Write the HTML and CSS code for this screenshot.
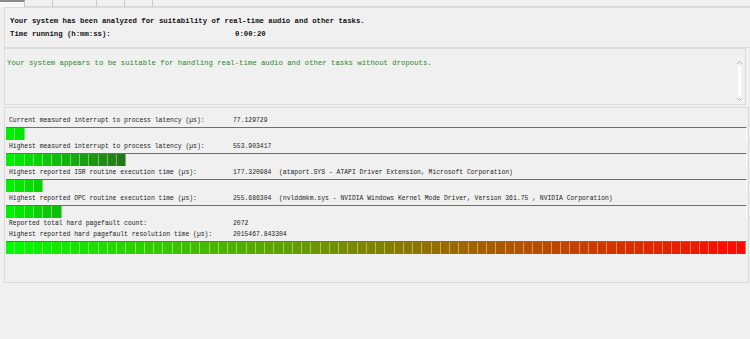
FILE: index.html
```html
<!DOCTYPE html>
<html lang="en">
<head>
<meta charset="UTF-8">
<title>Latency check</title>
<link rel="stylesheet" href="styles.css">
</head>
<body>
<div class="tabs">
  <div class="tab active"></div>
  <div class="tab w28"></div>
  <div class="tab w44"></div>
  <div class="tab w28"></div>
  <div class="tab w28"></div>
  <div class="tab rest"></div>
</div>
<div class="page">
  <div class="summary">
    <div class="pair strong"><span>Your system has been analyzed for suitability of real-time audio and other tasks.</span></div>
    <div class="pair strong"><span>Time running (h:mm:ss):</span><span>0:00:20</span></div>
  </div>

  <div class="verdict">
    <p>Your system appears to be suitable for handling real-time audio and other tasks without dropouts.</p>
    <div class="scrollbar">
      <svg width="7" height="5" viewBox="0 0 7 5"><path d="M1 4 L3.5 1.5 L6 4" fill="none" stroke="#b5b5b5" stroke-width="1"/></svg>
      <div class="track"></div>
      <svg width="7" height="5" viewBox="0 0 7 5"><path d="M1 1 L3.5 3.5 L6 1" fill="none" stroke="#b5b5b5" stroke-width="1"/></svg>
    </div>
  </div>

  <div class="measures">
    <div class="row"><span>Current measured interrupt to process latency (µs):</span><span>77.129729</span></div>
    <div class="meter" data-fill="2"></div>
    <div class="row"><span>Highest measured interrupt to process latency (µs):</span><span>553.903417</span></div>
    <div class="meter" data-fill="13"></div>
    <div class="row"><span>Highest reported ISR routine execution time (µs):</span><span>177.320984&nbsp;&nbsp;(ataport.SYS - ATAPI Driver Extension, Microsoft Corporation)</span></div>
    <div class="meter" data-fill="4"></div>
    <div class="row"><span>Highest reported DPC routine execution time (µs):</span><span>255.686304&nbsp;&nbsp;(nvlddmkm.sys - NVIDIA Windows Kernel Mode Driver, Version 361.75 , NVIDIA Corporation)</span></div>
    <div class="meter" data-fill="6"></div>
    <div class="row short"><span>Reported total hard pagefault count:</span><span>2072</span></div>
    <div class="row short"><span>Highest reported hard pagefault resolution time (µs):</span><span>2015467.843304</span></div>
    <div class="meter full" data-fill="80"></div>
  </div>
</div>
<script src="script.js"></script>
</body>
</html>
```

FILE: styles.css
```css
body, html {
  margin: 0;
  padding: 0;
  background-color: #f0f0f0; /* windows dialog grey */
  font-family: "Liberation Mono", "Courier New", monospace;
  color: #1c1c1c;
  overflow: hidden;
}

/* tab strip, only the bottom edge is visible */
.tabs {
  display: flex;
  height: 7px;
}
.tab {
  width: 25px;
  border-right: 1px solid #c9c9c9;
  border-bottom: 1px solid #d9d9d9;
  box-sizing: border-box;
}
.tab.active {
  border-top: 2px solid #8a8a8a;
  border-bottom: none;
  background-color: #f7f7f7;
}
.tab.w28 { width: 28px; }
.tab.w44 { width: 44px; }
.tab.rest { flex: 1; border-right: none; }

.page {
  padding-left: 4px;
}

.summary {
  border: 1px solid #dcdcdc;
  border-right: none;
  padding: 7px 0 6px 5px;
  font-size: 7.3px;
}
.pair {
  display: grid;
  grid-template-columns: 225px 1fr;
  height: 13px;
  line-height: 13px;
  white-space: nowrap;
}
.pair.strong {
  font-weight: bold;
  color: #111;
}

.verdict {
  display: flex;
  height: 55px;
  margin-right: 4px;
  border: 1px solid #dcdcdc;
}
.verdict p {
  flex: 1;
  margin: 0;
  padding: 8px 0 0 2px;
  font-size: 7.3px;
  line-height: 13px;
  color: #2a882a;
  white-space: nowrap;
}
.scrollbar {
  display: flex;
  flex-direction: column;
  align-items: center;
  width: 7px;
  padding: 11px 0 2px;
  margin-right: 2px;
}
.scrollbar .track {
  flex: 1;
  width: 3px;
  background-color: #ffffff;
  margin: 1px 0;
}

.measures {
  margin: 2px 1px 0 0;
  border: 1px solid #d9d9d9;
  padding: 6px 0 28px;
}
.row {
  display: grid;
  grid-template-columns: 224px 1fr;
  height: 13px;
  line-height: 13px;
  padding-left: 4px;
  font-size: 6.4px;
  white-space: nowrap;
}
.row.short {
  height: 11px;
  line-height: 11px;
}

.meter {
  display: grid;
  grid-template-columns: repeat(80, 1fr);
  height: 12px;
  margin: 0 1px;
  border-top: 1px solid #6f6f6f;
  border-right: 1px solid #ffffff;
}
.meter.full {
  margin-top: 1px;
}
.meter .cell.on {
  box-shadow: inset -1px 0 0 rgba(255, 255, 255, 0.4);
}
```

FILE: script.js
```js
// colour of the long meter: green -> olive -> red
function ramp(t) {
  var r = Math.round(255 * t);
  var g = Math.round(240 * (1 - t) + 10);
  return 'rgb(' + r + ',' + g + ',0)';
}

// short meters just get darker green
function green(i) {
  var g = Math.max(120, 240 - i * 10);
  return 'rgb(' + (i * 3) + ',' + g + ',' + (i * 2) + ')';
}

document.querySelectorAll('.meter').forEach(function (meter) {
  var fill = Number(meter.dataset.fill);
  var full = fill === 80;
  for (var i = 0; i < 80; i++) {
    var cell = document.createElement('div');
    cell.className = 'cell';
    if (i < fill) {
      cell.classList.add('on');
      cell.style.background = full ? ramp(i / 79) : green(i);
    }
    meter.appendChild(cell);
  }
});
```
